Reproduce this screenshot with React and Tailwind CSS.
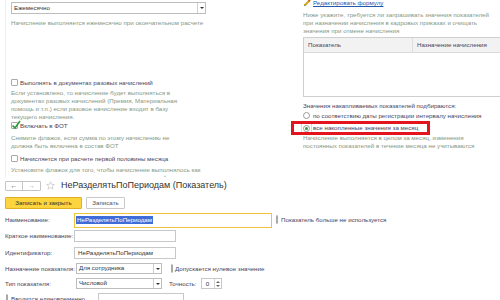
import React from 'react';

const hint = 'text-[#869886]';
const label = 'text-[#4b4358]';

const Check = ({ checked }) => (
  <span className="relative w-[7px] h-[7px] border border-[#a9a9a9] bg-white rounded-[1px] shrink-0">
    {checked && (
      <svg viewBox="0 0 10 10" className="absolute left-[-1px] top-[-3px] w-[10px] h-[10px]">
        <path d="M1.5 5.5 4 8 9 1" fill="none" stroke="#2f9a3a" strokeWidth="1.6" />
      </svg>
    )}
  </span>
);

const Radio = ({ on }) => (
  <span className="flex items-center justify-center w-[7px] h-[7px] rounded-full border border-[#9a9a9a] bg-white shrink-0">
    {on && <span className="w-[3px] h-[3px] rounded-full bg-[#2f9a3a]" />}
  </span>
);

const Arrow = () => (
  <span className="flex items-center justify-center w-[8px] h-full border-l border-[#cfcfcf]">
    <span className="w-0 h-0 border-l-[2px] border-r-[2px] border-t-[2px] border-l-transparent border-r-transparent border-t-[#333]" />
  </span>
);

const Select = ({ text, w, h = 'h-[11px]' }) => (
  <div className={`flex items-center ${w} ${h} border border-[#bdbdbd] bg-white`}>
    <span className="flex-1 pl-[2px] text-[#333] leading-none">{text}</span>
    <Arrow />
  </div>
);

const Pencil = () => (
  <svg viewBox="0 0 10 10" className="w-[8px] h-[8px]">
    <path d="M2 8 8 2" stroke="#e0a020" strokeWidth="2.6" />
    <path d="M7.2 1.2 8.8 2.8" stroke="#c86a2a" strokeWidth="2.6" />
    <path d="M1 9 2.2 6.8 3.2 7.8Z" fill="#4a7a2a" />
  </svg>
);

export default function App() {
  return (
    <div className="w-[500px] h-[300px] overflow-hidden bg-white text-[6.2px] leading-[8px] whitespace-nowrap font-['Liberation_Sans',Arial,sans-serif]">
      {/* окно начисления, за формой */}
      <div className="flex h-[177px] overflow-hidden">
        <div className="w-[298px] ml-[5px] pl-[5px] border-l border-[#eeeeee] shrink-0">
          <div className="mt-[2px] w-[195px]">
            <Select text="Ежемесячно" w="w-[195px]" h="h-[12px]" />
          </div>
          <p className={`mt-[5px] ${hint}`}>Начисление выполняется ежемесячно при окончательном расчете</p>

          <div className="mt-[51px] flex items-center h-[9px] gap-[2px]">
            <Check />
            <span className={label}>Выполнять в документах разовых начислений</span>
          </div>
          <p className={`mt-[2px] ${hint}`}>
            Если установлено, то начисление будет выполняться в<br />
            документах разовых начислений (Премия, Материальная<br />
            помощь и т.п.) если разовое начисление входит в базу<br />
            текущего начисления.
          </p>

          <div className="flex items-center h-[9px] gap-[2px]">
            <Check checked />
            <span className={label}>Включать в ФОТ</span>
          </div>
          <p className={`mt-[4px] ${hint}`}>
            Снимите флажок, если сумма по этому начислению не<br />
            должна быть включена в состав ФОТ
          </p>

          <div className="mt-[4px] flex items-center h-[9px] gap-[2px]">
            <Check />
            <span className={label}>Начисляется при расчете первой половины месяца</span>
          </div>
          <p className={`mt-[3px] ${hint}`}>
            Установите флажок для того, чтобы начисление выполнялось как<br />
            при окончательном расчете, так и при расчете первой половины
          </p>
        </div>

        <div className="flex-1 min-w-0">
          <div className="mt-[-1px] flex items-center h-[8px] gap-[2px]">
            <Pencil />
            <span className="text-[#2459b0] underline">Редактировать формулу</span>
          </div>
          <p className={`mt-[4px] ${hint}`}>
            Ниже укажите, требуется ли запрашивать значения показателей<br />
            при назначении начисления в кадровых приказах и очищать<br />
            значения при отмене начисления
          </p>
          <div className="mt-[2px] w-[220px] h-[60px] border border-[#cfcfcf] border-r-0">
            <div className="flex h-[15px] bg-[#f2f2f2] border-b border-[#dadada] text-[#4b4358]">
              <div className="w-[109px] pl-[4px] flex items-center border-r border-[#dedede]">Показатель</div>
              <div className="flex-1 pl-[4px] flex items-center">Назначение начисления</div>
            </div>
          </div>

          <p className={`mt-[5px] ${label}`}>Значения накапливаемых показателей подбираются:</p>
          <div className="mt-[1px] flex items-center h-[9px] gap-[3px]">
            <Radio />
            <span className={label}>по соответствию даты регистрации интервалу начисления</span>
          </div>
          <div className="relative mt-[4px] flex items-center h-[8px] gap-[3px]">
            <span className="absolute left-[-12px] top-[-3px] w-[139px] h-[14px] border-[3px] border-[#e3141e]" />
            <span className="flex items-center justify-center w-[11px] h-[10px] ml-[-2px] mr-[-2px] border border-[#f3d98c]">
              <Radio on />
            </span>
            <span className={label}>все накопленные значения за месяц</span>
          </div>
          <p className={`mt-[2px] ${hint}`}>
            Начисление выполняется в целом за месяц, изменения<br />
            постоянных показателей в течение месяца не учитываются
          </p>
        </div>
      </div>

      {/* форма показателя */}
      <div className="pt-[3px] bg-white">
        <div className="flex items-center h-[11px] pl-[5px]">
          <div className="flex h-[10px] border border-[#c4c4c4] rounded-[1px] text-[#555] text-[7px] leading-none">
            <span className="w-[17px] flex items-center justify-center border-r border-[#c4c4c4]">←</span>
            <span className="w-[17px] flex items-center justify-center text-[#aaa]">→</span>
          </div>
          <svg viewBox="0 0 10 10" className="ml-[5px] w-[9px] h-[9px]">
            <path d="M5 .8 6.2 3.7 9.3 3.9 6.9 5.9 7.7 9 5 7.3 2.3 9 3.1 5.9.7 3.9 3.8 3.7Z" fill="none" stroke="#bdbdbd" strokeWidth=".7" />
          </svg>
          <span className="ml-[6px] text-[9px] leading-none text-[#333]">НеРазделятьПоПериодам (Показатель)</span>
        </div>

        <div className="mt-[6px] flex gap-[4px] pl-[5px] h-[12px]">
          <span className="w-[77px] flex items-center justify-center bg-[#fbd43e] border border-[#e0b020] rounded-[1px] text-[#333]">Записать и закрыть</span>
          <span className="w-[39px] flex items-center justify-center bg-white border border-[#c8c8c8] rounded-[1px] text-[#555]">Записать</span>
        </div>

        <div className="mt-[3px] pl-[5px]">
          <div className="flex items-center h-[16px]">
            <span className={`w-[69px] ${label}`}>Наименование:</span>
            <div className="w-[198px] h-[15px] border border-[#f0c33c] flex items-center pl-[1px]">
              <span className="bg-[#3e6dd8] text-white leading-[8px] px-[1px]">НеРазделятьПоПериодам</span>
            </div>
            <span className="ml-[4px]"><Check /></span>
            <span className={`ml-[3px] ${label}`}>Показатель больше не используется</span>
          </div>
          <div className="flex items-center h-[16px]">
            <span className={`w-[69px] ${label}`}>Краткое наименование:</span>
            <div className="w-[102px] h-[12px] border border-[#c8c8c8]" />
          </div>
          <div className="flex items-center h-[17px]">
            <span className={`w-[69px] ${label}`}>Идентификатор:</span>
            <div className="w-[102px] h-[12px] border border-[#c8c8c8] flex items-center pl-[3px] text-[#333]">НеРазделятьПоПериодам</div>
          </div>
          <div className="flex items-center h-[15px]">
            <span className={`w-[71px] ${label}`}>Назначение показателя:</span>
            <Select text="Для сотрудника" w="w-[86px]" />
            <span className="ml-[9px]"><Check /></span>
            <span className={`ml-[2px] ${label}`}>Допускается нулевое значение</span>
          </div>
          <div className="flex items-center h-[15px]">
            <span className={`w-[71px] ${label}`}>Тип показателя:</span>
            <Select text="Числовой" w="w-[86px]" />
            <span className={`ml-[7px] ${label}`}>Точность:</span>
            <div className="ml-[4px] w-[21px] h-[11px] border border-[#c8c8c8] flex">
              <span className="flex-1 flex items-center justify-center text-[#333]">0</span>
              <span className="w-[7px] border-l border-[#d4d4d4] flex flex-col items-center justify-center gap-[2px]">
                <span className="w-0 h-0 border-l-[2px] border-r-[2px] border-b-[2px] border-l-transparent border-r-transparent border-b-[#666]" />
                <span className="w-0 h-0 border-l-[2px] border-r-[2px] border-t-[2px] border-l-transparent border-r-transparent border-t-[#666]" />
              </span>
            </div>
          </div>
          <div className="flex items-center h-[15px]">
            <span className="ml-[1px]"><Check /></span>
            <span className={`ml-[3px] w-[87px] ${label}`}>Вводится единовременно</span>
            <div className="w-[86px] h-[11px] border border-[#c8c8c8]" />
          </div>
        </div>
      </div>
    </div>
  );
}
